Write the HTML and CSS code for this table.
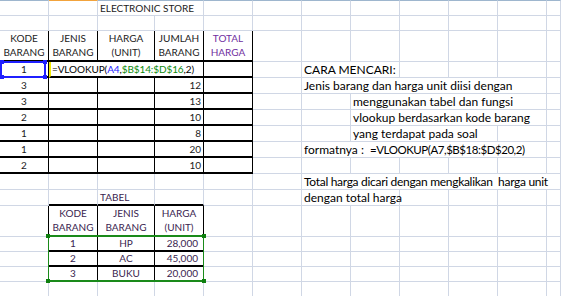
FILE: index.html
```html
<!DOCTYPE html>
<html>
<head>
<meta charset="utf-8">
<link rel="stylesheet" href="styles.css">
</head>
<body>
<div class="sheet">
  <!-- row 1 -->
  <div class="c t"></div><div class="c t active"></div><div class="c t s2">ELECTRONIC STORE</div><div class="c t"></div><div class="c t"></div><div class="c t"></div><div class="c t"></div><div class="c t"></div><div class="c t"></div><div class="c t"></div><div class="c t"></div>
  <!-- row 2 -->
  <div class="c"></div><div class="c"></div><div class="c"></div><div class="c"></div><div class="c"></div><div class="c"></div><div class="c"></div><div class="c"></div><div class="c"></div><div class="c"></div><div class="c"></div><div class="c"></div>
  <!-- row 3 -->
  <div class="c hd br bb">KODE<br>BARANG</div><div class="c hd br bb">JENIS<br>BARANG</div><div class="c hd br bb">HARGA<br>(UNIT)</div><div class="c hd br bb">JUMLAH<br>BARANG</div><div class="c hd br bb purple">TOTAL<br>HARGA</div><div class="c"></div><div class="c"></div><div class="c"></div><div class="c"></div><div class="c"></div><div class="c"></div><div class="c"></div>
  <!-- row 4 -->
  <div class="c ctr br bb anchor"><span>1</span><div class="selb"><i class="h htl"></i><i class="h htr"></i><i class="h hbl"></i><i class="h hbr"></i></div></div><div class="c s3 br bb formula"><span>=VLOOKUP(<span class="ref1">A4</span>,<span class="ref2">$B$14:$D$16</span>,2)</span></div><div class="c br bb"></div><div class="c"></div><div class="c s2 tx">CARA MENCARI:</div><div class="c"></div><div class="c"></div><div class="c"></div><div class="c"></div>
  <!-- row 5 -->
  <div class="c ctr br bb">3</div><div class="c br bb"></div><div class="c br bb"></div><div class="c num br bb">12</div><div class="c br bb"></div><div class="c"></div><div class="c s5 tx">Jenis barang dan harga unit diisi dengan</div><div class="c"></div>
  <!-- row 6 -->
  <div class="c ctr br bb">3</div><div class="c br bb"></div><div class="c br bb"></div><div class="c num br bb">13</div><div class="c br bb"></div><div class="c"></div><div class="c"></div><div class="c s4 tx">menggunakan tabel dan fungsi</div><div class="c"></div>
  <!-- row 7 -->
  <div class="c ctr br bb">2</div><div class="c br bb"></div><div class="c br bb"></div><div class="c num br bb">10</div><div class="c br bb"></div><div class="c"></div><div class="c"></div><div class="c s4 tx">vlookup berdasarkan kode barang</div><div class="c"></div>
  <!-- row 8 -->
  <div class="c ctr br bb">1</div><div class="c br bb"></div><div class="c br bb"></div><div class="c num br bb">8</div><div class="c br bb"></div><div class="c"></div><div class="c"></div><div class="c s3 tx">yang terdapat pada soal</div><div class="c"></div><div class="c"></div>
  <!-- row 9 -->
  <div class="c ctr br bb">1</div><div class="c br bb"></div><div class="c br bb"></div><div class="c num br bb">20</div><div class="c br bb"></div><div class="c"></div><div class="c s5 tx"><span>formatnya :  </span><span class="fx">=VLOOKUP(A7,$B$18:$D$20,2)</span></div><div class="c"></div>
  <!-- row 10 -->
  <div class="c ctr br bb">2</div><div class="c br bb"></div><div class="c br bb"></div><div class="c num br bb">10</div><div class="c br bb"></div><div class="c"></div><div class="c"></div><div class="c"></div><div class="c"></div><div class="c"></div><div class="c"></div><div class="c"></div>
  <!-- row 11 -->
  <div class="c"></div><div class="c"></div><div class="c"></div><div class="c"></div><div class="c"></div><div class="c"></div><div class="c s6 tx tight">Total harga dicari dengan mengkalikan  harga unit</div>
  <!-- row 12 -->
  <div class="c"></div><div class="c bb"></div><div class="c bb tbl">TABEL</div><div class="c bb"></div><div class="c"></div><div class="c"></div><div class="c s2 tx">dengan total harga</div><div class="c"></div><div class="c"></div><div class="c"></div><div class="c"></div>
  <!-- row 13 -->
  <div class="c br"></div><div class="c hd br bb lk">KODE<br>BARANG</div><div class="c hd br bb lk">JENIS<br>BARANG</div><div class="c hd br bb lk">HARGA<br>(UNIT)</div><div class="c"></div><div class="c"></div><div class="c"></div><div class="c"></div><div class="c"></div><div class="c"></div><div class="c"></div><div class="c"></div>
  <!-- row 14 -->
  <div class="c br"></div><div class="c ctr br bb lk anchor">1<div class="selg"><i class="g gtl"></i><i class="g gtr"></i><i class="g gbl"></i><i class="g gbr"></i></div></div><div class="c ctr br bb lk">HP</div><div class="c money br bb lk">28,000</div><div class="c"></div><div class="c"></div><div class="c"></div><div class="c"></div><div class="c"></div><div class="c"></div><div class="c"></div><div class="c"></div>
  <!-- row 15 -->
  <div class="c br"></div><div class="c ctr br bb lk">2</div><div class="c ctr br bb lk">AC</div><div class="c money br bb lk">45,000</div><div class="c"></div><div class="c"></div><div class="c"></div><div class="c"></div><div class="c"></div><div class="c"></div><div class="c"></div><div class="c"></div>
  <!-- row 16 -->
  <div class="c br"></div><div class="c ctr br bb lk">3</div><div class="c ctr br bb lk">BUKU</div><div class="c money br bb lk">20,000</div><div class="c"></div><div class="c"></div><div class="c"></div><div class="c"></div><div class="c"></div><div class="c"></div><div class="c"></div><div class="c"></div>
  <!-- row 17 -->
  <div class="c"></div><div class="c"></div><div class="c"></div><div class="c"></div><div class="c"></div><div class="c"></div><div class="c"></div><div class="c"></div><div class="c"></div><div class="c"></div><div class="c"></div><div class="c"></div>
</div>
</body>
</html>
```
FILE: styles.css
```css
* { box-sizing: border-box; margin: 0; padding: 0; }
html, body { background: #fff; }
body { margin: 0; font-family: Lato, "Liberation Sans", sans-serif; }

.sheet {
  display: grid;
  grid-template-columns: 49px 49px 57px repeat(8, 49px) 1fr;
  grid-template-rows: 16px 15px 31px repeat(9, 16px) 31px repeat(4, 15px);
  width: 561px;
  height: 296px;
  overflow: hidden;
  font-size: 10px;
  color: #1c1c1c;
}

.c {
  display: flex;
  align-items: flex-end;
  min-width: 0;
  padding: 0 2px;
  line-height: 14px;
  white-space: nowrap;
  border-right: 1px solid #d0d7e5;
  border-bottom: 1px solid #d0d7e5;
}

.t { border-top: 1px solid #9eb6ce; }
.t.active { border-top-color: #f2a33c; }

.s2 { grid-column: span 2; }
.s3 { grid-column: span 3; }
.s4 { grid-column: span 4; }
.s5 { grid-column: span 5; }
.s6 { grid-column: span 6; }

.br { border-right-color: #000; }
.bb { border-bottom: 2px solid #000; }

.ctr { justify-content: center; }
.num { justify-content: flex-end; }
.money { justify-content: flex-end; padding-right: 5px; }

.hd {
  white-space: normal;
  text-align: center;
  justify-content: center;
  padding-bottom: 1px;
}

.purple { color: #7030a0; }
.lk, .tbl { color: #3a2550; }

.tx {
  font-size: 12px;
  color: #000;
  white-space: pre;
}
.tight { letter-spacing: -0.3px; }
.fx { font-size: 11.5px; letter-spacing: -0.45px; }

.formula {
  border-left: 2px solid #f3ea00;
  padding-left: 1px;
  color: #000;
  letter-spacing: -0.1px;
}
.ref1 { color: #1a1aff; }
.ref2 { color: #0b8a0b; }

.anchor { position: relative; }

.selb {
  position: absolute;
  left: 0;
  top: -1px;
  width: 46px;
  height: 17px;
  border: 2px solid #1f1fff;
  z-index: 2;
}
.h {
  position: absolute;
  width: 4px;
  height: 4px;
  background: #1f1fff;
}
.htl { left: -2px; top: -3px; }
.htr { right: -3px; top: -3px; }
.hbl { left: -2px; bottom: -3px; }
.hbr { right: -3px; bottom: -3px; }

.selg {
  position: absolute;
  left: -1px;
  top: -2px;
  width: 156px;
  height: 47px;
  border: 1px solid #1a8a1a;
  border-top-width: 2px;
  border-bottom-width: 2px;
  z-index: 2;
}
.g {
  position: absolute;
  width: 4px;
  height: 4px;
  background: #0f7f0f;
}
.gtl { left: -3px; top: -3px; }
.gtr { right: -3px; top: -3px; }
.gbl { left: -3px; bottom: -3px; }
.gbr { right: -3px; bottom: -3px; }
```
